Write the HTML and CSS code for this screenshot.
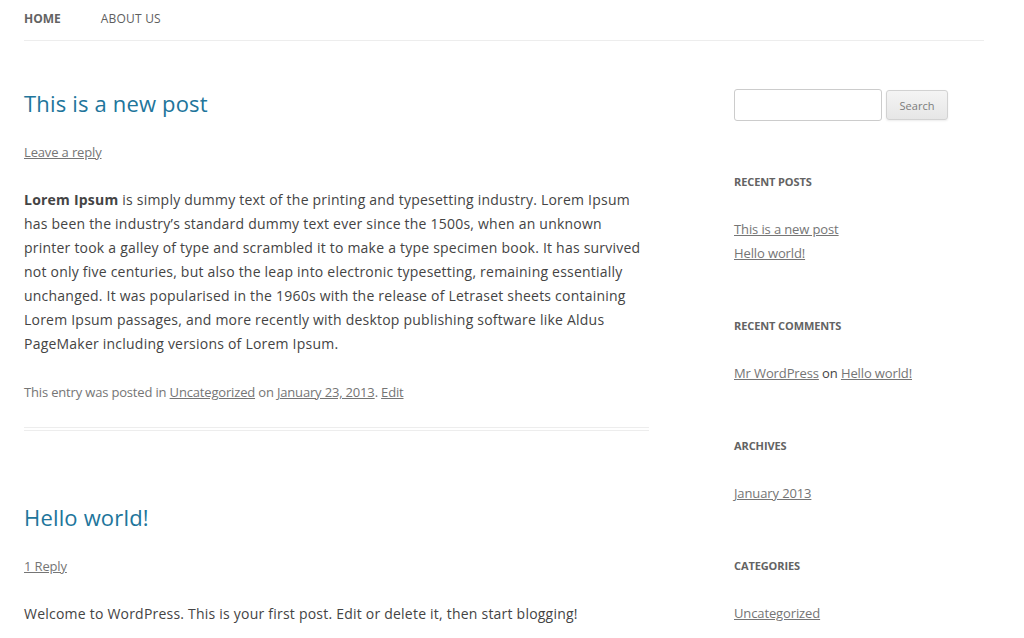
FILE: index.html
```html
<!DOCTYPE html>
<html lang="en">
<head>
<meta charset="utf-8">
<title>Site</title>
<link rel="stylesheet" href="styles.css">
</head>
<body>
<div class="site">
  <nav class="main-nav">
    <ul>
      <li class="current"><a href="#">Home</a></li>
      <li><a href="#">About Us</a></li>
    </ul>
  </nav>
  <div class="main">
    <div class="content">
      <article class="post">
        <header class="entry-header">
          <h1 class="entry-title"><a href="#">This is a new post</a></h1>
          <div class="comments-link"><a href="#">Leave a reply</a></div>
        </header>
        <div class="entry-content">
          <p><strong>Lorem Ipsum</strong> is simply dummy text of the printing and typesetting industry. Lorem Ipsum has been the industry’s standard dummy text ever since the 1500s, when an unknown printer took a galley of type and scrambled it to make a type specimen book. It has survived not only five centuries, but also the leap into electronic typesetting, remaining essentially unchanged. It was popularised in the 1960s with the release of Letraset sheets containing Lorem Ipsum passages, and more recently with desktop publishing software like Aldus PageMaker including versions of Lorem Ipsum.</p>
        </div>
        <footer class="entry-meta">This entry was posted in <a href="#">Uncategorized</a> on <a href="#">January 23, 2013</a>. <a href="#">Edit</a></footer>
      </article>
      <article class="post">
        <header class="entry-header">
          <h1 class="entry-title"><a href="#">Hello world!</a></h1>
          <div class="comments-link"><a href="#">1 Reply</a></div>
        </header>
        <div class="entry-content">
          <p>Welcome to WordPress. This is your first post. Edit or delete it, then start blogging!</p>
        </div>
      </article>
    </div>
    <aside class="sidebar">
      <div class="widget widget-search">
        <form class="search-form">
          <input type="text" class="search-input"> <button type="button" class="search-btn">Search</button>
        </form>
      </div>
      <div class="widget">
        <h3 class="widget-title">Recent Posts</h3>
        <ul>
          <li><a href="#">This is a new post</a></li>
          <li><a href="#">Hello world!</a></li>
        </ul>
      </div>
      <div class="widget">
        <h3 class="widget-title">Recent Comments</h3>
        <ul>
          <li><a href="#">Mr WordPress</a> on <a href="#">Hello world!</a></li>
        </ul>
      </div>
      <div class="widget">
        <h3 class="widget-title">Archives</h3>
        <ul>
          <li><a href="#">January 2013</a></li>
        </ul>
      </div>
      <div class="widget">
        <h3 class="widget-title">Categories</h3>
        <ul>
          <li><a href="#">Uncategorized</a></li>
        </ul>
      </div>
    </aside>
  </div>
</div>
</body>
</html>
```
FILE: styles.css
```css
* { box-sizing: border-box; }
html, body { margin: 0; padding: 0; background: #fff; }
body {
  font-family: "Open Sans", "Liberation Sans", sans-serif;
  color: #444;
  font-size: 14px;
  line-height: 24px;
  overflow: hidden;
}
.site {
  width: 960px;
  margin-left: 24px;
}
ul { list-style: none; margin: 0; padding: 0; }

.main-nav { border-bottom: 1px solid #ededed; height: 41px; padding-top: 1px; }
.main-nav ul { display: flex; gap: 40px; }
.main-nav li { font-size: 12px; line-height: 36px; text-transform: uppercase; letter-spacing: 0.2px; }
.main-nav a { color: #5e5e5e; text-decoration: none; }
.main-nav .current a { color: #636363; font-weight: bold; letter-spacing: 0; }

.main {
  display: flex;
  justify-content: space-between;
  align-items: flex-start;
  margin-top: 48px;
}
.content { width: 625px; }
.sidebar { width: 250px; }

.post {
  border-bottom: 4px double #ededed;
  padding-bottom: 23px;
  margin-bottom: 73px;
}
.entry-header { margin-bottom: 23px; }
.entry-title {
  margin: 1px 0 0;
  font-size: 22px;
  line-height: 26px;
  font-weight: normal;
  letter-spacing: 0.17px;
}
.entry-title a { color: #21759b; text-decoration: none; }
.comments-link { margin-top: 24px; font-size: 13px; line-height: 24px; letter-spacing: -0.15px; }
.comments-link a { color: #757575; }
.entry-content { padding-top: 1px; letter-spacing: 0.22px; }
.entry-content p { margin: 0 0 24px; }
.entry-content p:last-child { margin-bottom: 0; }
.entry-content strong { font-weight: bold; }
.entry-meta { margin-top: 24px; font-size: 13px; line-height: 24px; color: #757575; letter-spacing: -0.17px; }
.entry-meta a { color: #757575; }

.widget { margin-bottom: 48px; }
.widget-search { margin-bottom: 48px; }
.search-form { display: flex; gap: 4px; align-items: center; height: 32px; }
.search-input {
  width: 148px;
  height: 32px;
  border: 1px solid #ccc;
  border-radius: 3px;
  padding: 6px;
  font-family: inherit;
  background: #fff;
}
.search-btn {
  height: 30px;
  width: 62px;
  padding: 0 12px;
  font-family: inherit;
  font-size: 11px;
  line-height: 1;
  color: #7c7c7c;
  background: linear-gradient(to bottom, #f4f4f4, #e6e6e6);
  border: 1px solid #d2d2d2;
  border-radius: 3px;
  box-shadow: 0 1px 2px rgba(64, 64, 64, 0.1);
}
.widget-title {
  margin: 0 0 24px;
  padding-top: 1px;
  font-size: 11px;
  line-height: 23px;
  font-weight: bold;
  text-transform: uppercase;
  color: #636363;
  letter-spacing: -0.1px;
}
.widget li { font-size: 13px; line-height: 24px; color: #444; letter-spacing: -0.12px; }
.widget li a { color: #757575; }
```
